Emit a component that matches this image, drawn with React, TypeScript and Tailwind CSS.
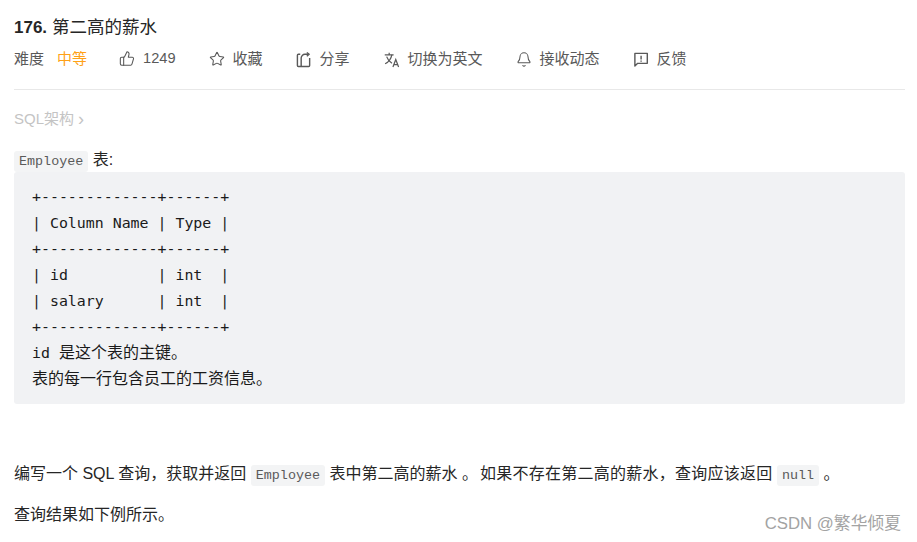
import { Bell, Star, ThumbsUp } from "lucide-react";

const sans = "font-['Liberation_Sans','Noto_Sans_CJK_SC',sans-serif]";
const mono = "font-['DejaVu_Sans_Mono','Noto_Sans_CJK_SC',monospace]";

function ShareIcon() {
  return (
    <svg width="17" height="17" viewBox="0 0 17 17" fill="none" stroke="currentColor" strokeWidth="1.5">
      <path d="M4.5 3H2.5a1 1 0 0 0-1 1v11a1 1 0 0 0 1 1h11a1 1 0 0 0 1-1V7" />
      <path d="M5.5 15.5V7a4 4 0 0 1 4-4h4" />
      <path d="M11.5 1 14 3l-2.500 2" strokeLinejoin="round" />
    </svg>
  );
}

function TranslateIcon() {
  return (
    <svg width="17" height="17" viewBox="0 0 17 17" fill="none" stroke="currentColor" strokeWidth="1.3">
      <path d="M.8 3.500h9.400M5.500 1.200v2.300" />
      <path d="M8.300 3.500C7.500 8 5 11 1.200 13" />
      <path d="M2.800 5.500C4 9 6 11 8.500 12.500" />
      <path d="M9.500 16.500 12.500 8.500l3 8M10.600 14h3.800" />
    </svg>
  );
}

function FeedbackIcon() {
  return (
    <svg width="17" height="17" viewBox="0 0 17 17" fill="none" stroke="currentColor" strokeWidth="1.5">
      <path d="M2 2h13.200v10.600H5L2 15.400z" strokeLinejoin="round" />
      <path d="M8.600 4.500v4M8.600 9.600v1.400" />
    </svg>
  );
}

function Action({ icon, label, className }: { icon: React.ReactNode; label: string; className?: string }) {
  return (
    <div className={`flex items-center gap-2 ${className ?? ""}`}>
      <span className="flex w-4 justify-center">{icon}</span>
      <span>{label}</span>
    </div>
  );
}

function Code({ children }: { children: string }) {
  return (
    <code className="rounded-[3px] bg-[#f3f4f5] px-[5px] py-[3px] font-['Liberation_Mono',monospace] text-[13.4px] text-[#5a5a5a]">
      {children}
    </code>
  );
}

export default function App() {
  return (
    <div className={`relative h-[542px] overflow-hidden bg-white pl-[14px] pr-3 ${sans} text-[#262626]`}>
      <h1 className="pt-[15px] text-[17.500px] leading-6">
        <span className="text-[17px] font-bold">176.</span> 第二高的薪水
      </h1>

      <div className="mt-[8px] flex h-[22px] items-center gap-[33px] text-[15px] text-[#595959]">
        <div className="mr-[-1px] flex gap-[13px]">
          <span>难度</span>
          <span className="text-[#ffa116]">中等</span>
        </div>
        <Action icon={<ThumbsUp size={17} strokeWidth={1.6} />} label="1249" className="text-[14.600px]" />
        <Action icon={<Star size={16} strokeWidth={1.6} />} label="收藏" />
        <Action icon={<ShareIcon />} label="分享" />
        <Action icon={<TranslateIcon />} label="切换为英文" className="ml-px" />
        <Action icon={<Bell size={17} strokeWidth={1.6} />} label="接收动态" />
        <Action icon={<FeedbackIcon />} label="反馈" />
      </div>

      <div className="mt-[19px] h-px bg-[#e8e8e8]" />

      <div className="mt-[17px] flex items-center gap-1 text-[15px] leading-6 text-[#c4c4c4]">
        SQL架构 <span className="text-[18px]">›</span>
      </div>

      <p className="mt-[18px] text-[16px] leading-[21px]">
        <Code>Employee</Code> 表:
      </p>

      <div className={`h-[232px] rounded-[3px] bg-[#f1f2f4] px-[18px] pt-[12px] ${mono} text-[14.900px] leading-[26px] text-[#1a1a1a]`}>
        <pre className="font-[inherit]">
          {`+-------------+------+
| Column Name | Type |
+-------------+------+
| id          | int  |
| salary      | int  |
+-------------+------+`}
        </pre>
        <p>
          id <span className="text-[16px]">是这个表的主键。</span>
        </p>
        <p className="text-[16px]">表的每一行包含员工的工资信息。</p>
      </div>

      <p className="mt-[58px] text-[16px] leading-6">
        编写一个 SQL 查询，获取并返回 <Code>Employee</Code> 表中第二高的薪水 。
        <span className="ml-[2px] tracking-[0.250px]">如果不存在第二高的薪水，查询应该返回</span> <Code>null</Code> 。
      </p>

      <p className="mt-[15px] text-[16px] leading-6">查询结果如下例所示。</p>

      <div className="absolute right-[16px] top-[512px] text-[16.800px] leading-6 text-[#a3a3a3]">CSDN @繁华倾夏</div>
    </div>
  );
}
